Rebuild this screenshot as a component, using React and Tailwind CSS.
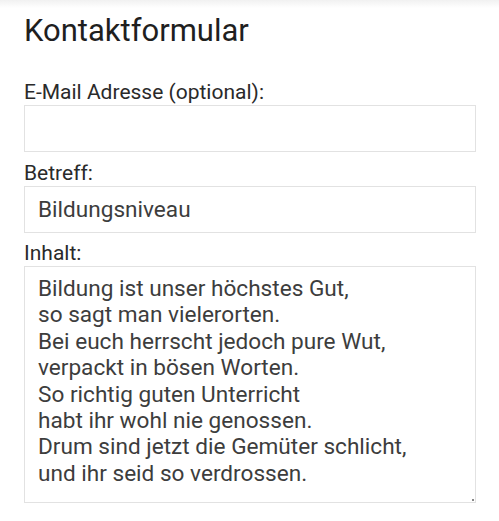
import React from 'react'

const poem = [
  'Bildung ist unser höchstes Gut,',
  'so sagt man vielerorten.',
  'Bei euch herrscht jedoch pure Wut,',
  'verpackt in bösen Worten.',
  'So richtig guten Unterricht',
  'habt ihr wohl nie genossen.',
  'Drum sind jetzt die Gemüter schlicht,',
  'und ihr seid so verdrossen.'
].join('\n')

const labelClass = 'block text-[21px] leading-[24px] text-[#2a2a2a]'
const fieldClass =
  'block w-full border border-[#e2e2e2] bg-white px-[13px] text-[22.6px] leading-[26.4px] text-[#3d3d3d] outline-none'

export default function App() {
  return (
    <div className="relative min-h-[521px] w-full bg-white font-['Roboto',sans-serif]">
      {/* faint shadow of the bar above */}
      <div className="absolute inset-x-0 top-0 h-[8px] bg-gradient-to-b from-[#f1f1f1] to-white" />

      <div className="relative pl-[24px] pr-[23px] pt-[14px]">
        <h1 className="text-[31px] leading-[34px] font-normal text-[#1f1f1f]">Kontaktformular</h1>

        <form className="mt-[32px]">
          <label htmlFor="email" className={labelClass}>E-Mail Adresse (optional):</label>
          <input id="email" type="email" className={`${fieldClass} mt-[1px] h-[47px]`} />

          <label htmlFor="subject" className={`${labelClass} mt-[9px]`}>Betreff:</label>
          <input
            id="subject"
            type="text"
            defaultValue="Bildungsniveau"
            className={`${fieldClass} mt-[1px] h-[47px]`}
          />

          <label htmlFor="content" className={`${labelClass} mt-[8px]`}>Inhalt:</label>
          <div className="relative mt-[1px]">
            <textarea
              id="content"
              defaultValue={poem}
              className={`${fieldClass} h-[237px] resize-none pt-[9px] overflow-hidden`}
            />
            <span className="absolute right-[2px] bottom-[2px] h-[2px] w-[2px] bg-[#888]" />
          </div>
        </form>
      </div>
    </div>
  )
}
